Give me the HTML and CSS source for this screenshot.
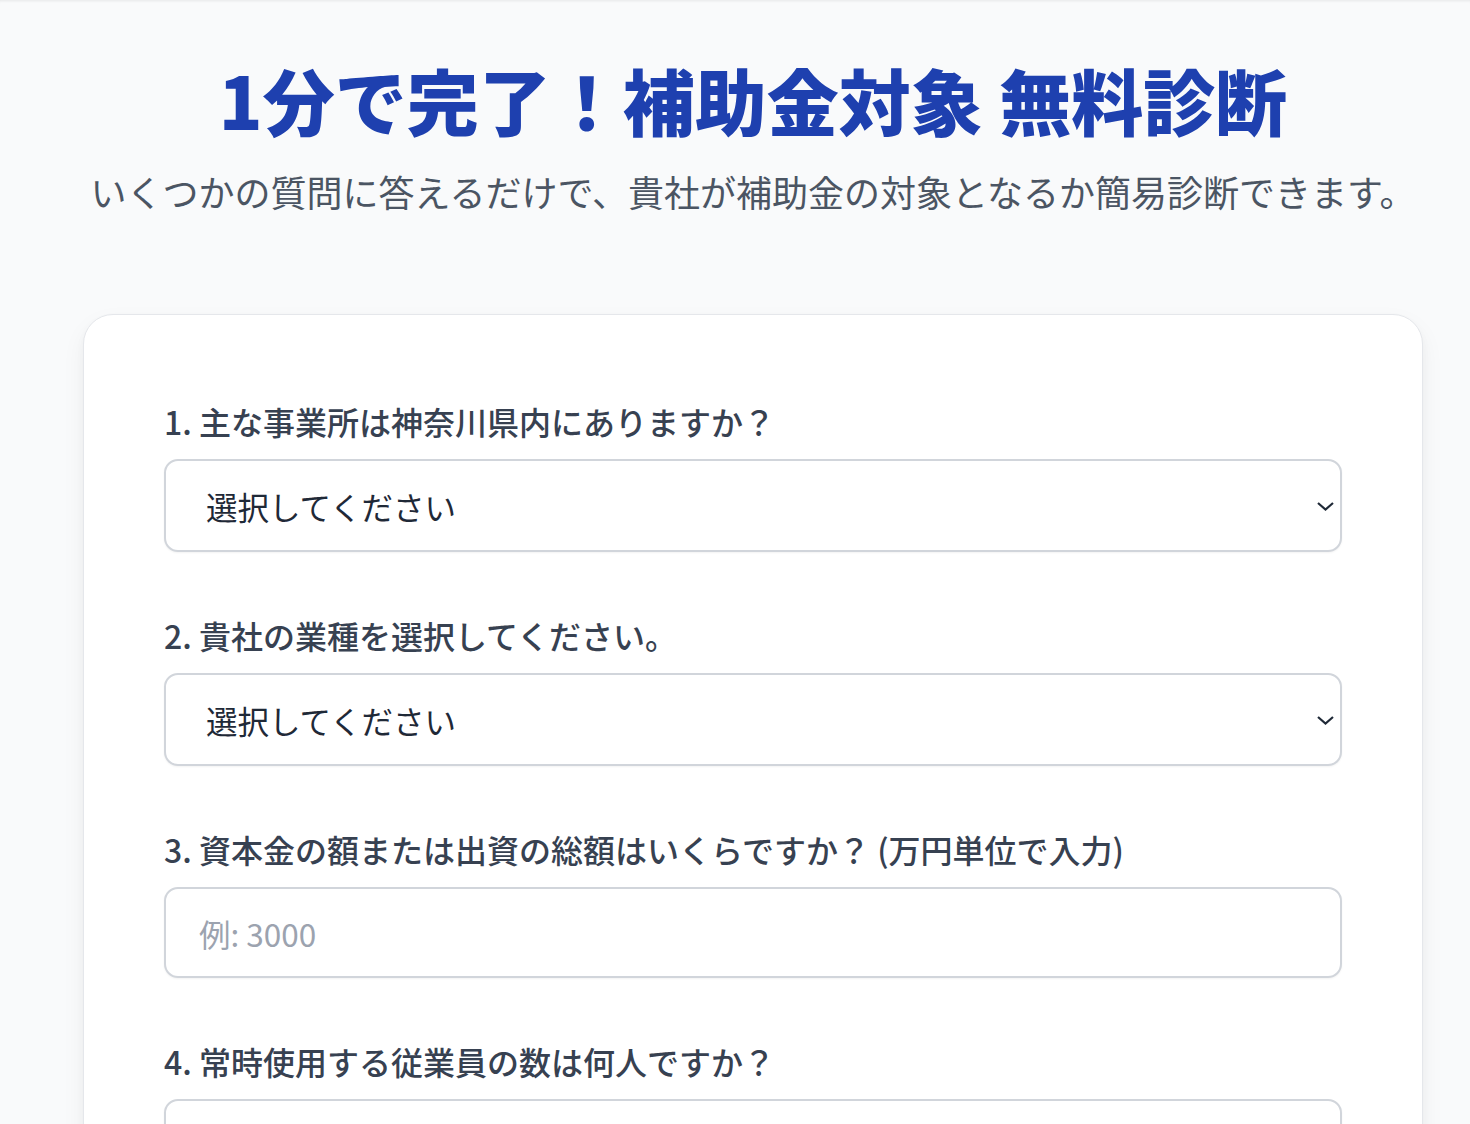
FILE: index.html
```html
<!DOCTYPE html>
<html lang="ja">
<head>
    <meta charset="UTF-8">
    <meta name="viewport" content="width=device-width, initial-scale=1.0">
    <title>補助金対象 無料診断</title>
    <link rel="stylesheet" href="styles.css">
</head>
<body>
    <main class="page">
        <header class="hero">
            <h1 class="hero-title">1分で完了！補助金対象 無料診断</h1>
            <p class="hero-lead">いくつかの質問に答えるだけで、貴社が補助金の対象となるか簡易診断できます。</p>
        </header>

        <form class="card" id="diagnosis-form">
            <div class="field">
                <label class="field-label" for="q1">1. 主な事業所は神奈川県内にありますか？</label>
                <div class="select-wrap">
                    <select class="control" id="q1">
                        <option value="">選択してください</option>
                        <option value="yes">はい</option>
                        <option value="no">いいえ</option>
                    </select>
                    <svg class="chevron" viewBox="0 0 17 9" width="17" height="9"><path d="M1 1l7.5 6.5L16 1" fill="none" stroke="#1f2937" stroke-width="2.2"/></svg>
                </div>
            </div>

            <div class="field">
                <label class="field-label" for="q2">2. 貴社の業種を選択してください。</label>
                <div class="select-wrap">
                    <select class="control" id="q2">
                        <option value="">選択してください</option>
                        <option value="mfg">製造業</option>
                        <option value="retail">小売業</option>
                        <option value="service">サービス業</option>
                    </select>
                    <svg class="chevron" viewBox="0 0 17 9" width="17" height="9"><path d="M1 1l7.5 6.5L16 1" fill="none" stroke="#1f2937" stroke-width="2.2"/></svg>
                </div>
            </div>

            <div class="field">
                <label class="field-label" for="q3">3. 資本金の額または出資の総額はいくらですか？ (万円単位で入力)</label>
                <input class="control control-input" id="q3" type="number" placeholder="例: 3000">
            </div>

            <div class="field">
                <label class="field-label" for="q4">4. 常時使用する従業員の数は何人ですか？</label>
                <input class="control control-input" id="q4" type="number" placeholder="例: 20">
            </div>
        </form>
    </main>
</body>
</html>
```

FILE: styles.css
```css
body {
    margin: 0;
    background-color: #f9fafb;
    font-family: "Noto Sans CJK JP", "Noto Sans", sans-serif;
    color: #1f2937;
}

.page {
    padding: 56px 47px 80px 83px;
    box-shadow: inset 0 3px 3px -2px rgba(0, 0, 0, 0.08);
}

.hero {
    text-align: center;
}

.hero-title {
    margin: 0;
    font-size: 72px;
    line-height: 86px;
    font-weight: 800;
    color: #1e40af;
}

.hero-lead {
    margin: 23px 0 0;
    font-size: 36px;
    line-height: 52px;
    color: #4b5563;
}

.card {
    margin-top: 97px;
    padding: 82px 80px 80px;
    background-color: #fff;
    border: 1px solid #e5e7eb;
    border-radius: 30px;
    box-shadow: 0 10px 25px rgba(0, 0, 0, 0.05), 0 4px 8px rgba(0, 0, 0, 0.03);
    display: flex;
    flex-direction: column;
    gap: 59px;
}

.field {
    display: flex;
    flex-direction: column;
}

.field-label {
    font-size: 32px;
    line-height: 48px;
    font-weight: 500;
    color: #374151;
    margin-bottom: 14px;
}

.select-wrap {
    position: relative;
}

.control {
    box-sizing: border-box;
    width: 100%;
    height: 93px;
    border: 2px solid #d1d5db;
    border-radius: 14px;
    background-color: #fff;
    font-family: inherit;
    font-size: 31.5px;
    color: #1f2937;
    box-shadow: 0 1px 2px rgba(0, 0, 0, 0.05);
    outline: none;
}

select.control {
    appearance: none;
    -webkit-appearance: none;
    padding: 0 40px;
}

.control-input {
    height: 91px;
    padding: 0 33px;
}

.control-input::placeholder {
    color: #9ca3af;
}

.chevron {
    position: absolute;
    right: 8px;
    top: 50%;
    margin-top: -4px;
    pointer-events: none;
}
```
